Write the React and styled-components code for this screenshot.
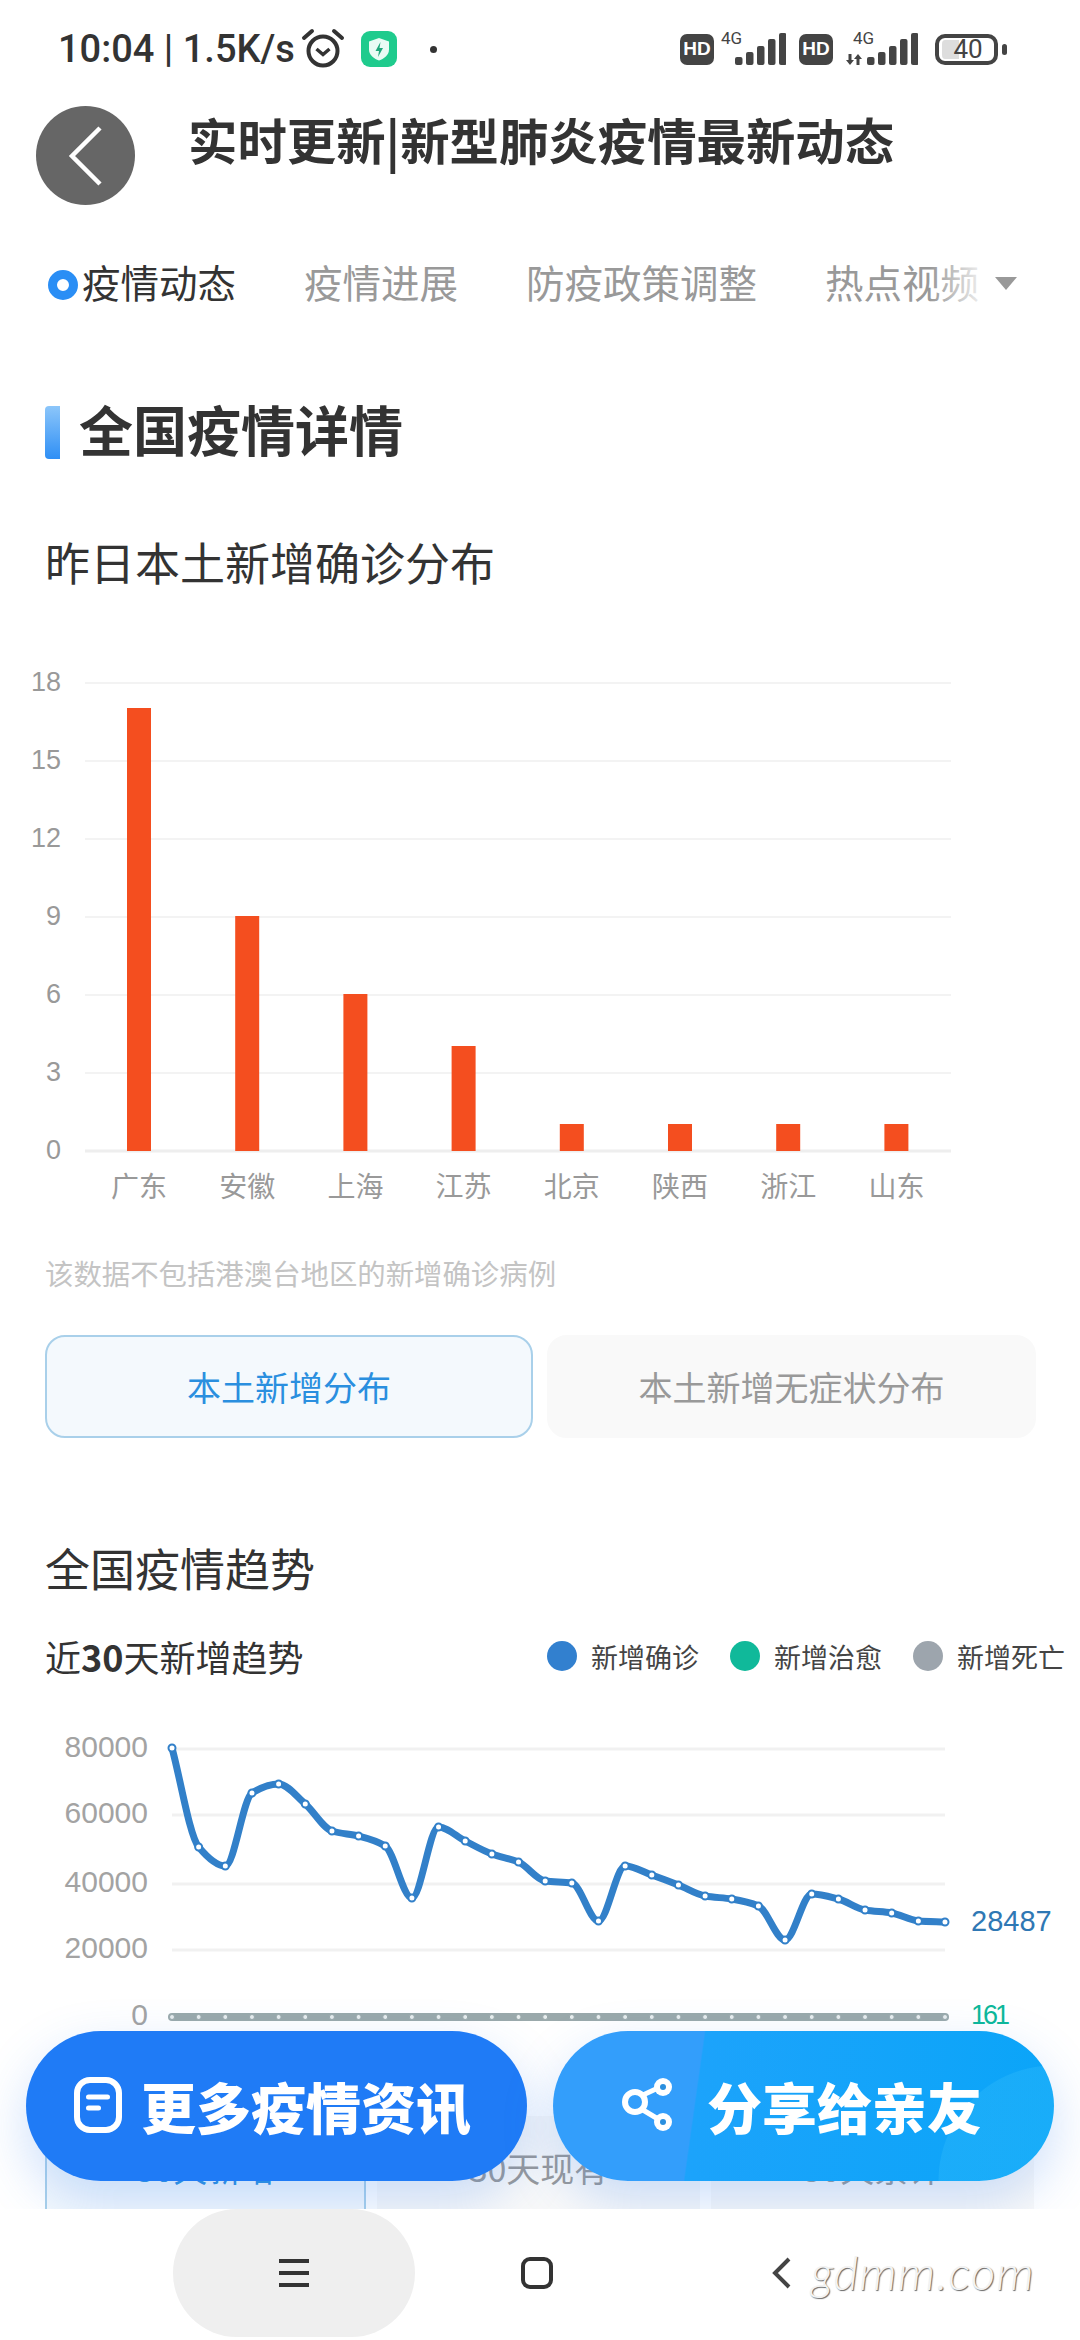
import styled, { createGlobalStyle } from "styled-components";

const GlobalStyle = createGlobalStyle`
  html, body {
    margin: 0;
    padding: 0;
    background: #fff;
  }
  * {
    box-sizing: border-box;
  }
`;

const Page = styled.div`
  position: relative;
  width: 1080px;
  height: 2340px;
  display: flex;
  flex-direction: column;
  overflow: hidden;
  background: #fff;
  color: #333;
  font-family: "Noto Sans CJK SC", "Noto Sans", sans-serif;
`;

const Content = styled.main`
  flex: 1;
  min-height: 0;
  overflow: hidden;
`;

const StatusBar = styled.div`
  height: 96px;
  display: flex;
  align-items: center;
  padding: 2px 73px 0 58px;
`;

const Clock = styled.span`
  font-family: Roboto, sans-serif;
  font-size: 38px;
  font-weight: 500;
  color: #333;
  white-space: nowrap;
`;

const AlarmIcon = styled.svg`
  width: 44px;
  height: 42px;
  margin-left: 6px;
`;

const ShieldIcon = styled.svg`
  width: 38px;
  height: 38px;
  margin-left: 15px;
`;

const Dot = styled.span`
  width: 7px;
  height: 7px;
  margin-left: 32px;
  border-radius: 50%;
  background: #333;
`;

const StatusRight = styled.div`
  margin-left: auto;
  display: flex;
  align-items: center;
`;

const HdTile = styled.span`
  width: 34px;
  height: 31px;
  margin-right: ${({ $gap }) => $gap}px;
  border-radius: 7px;
  background: #444;
  color: #fff;
  display: flex;
  align-items: center;
  justify-content: center;
  font-family: "Liberation Sans", sans-serif;
  font-size: 19px;
  font-weight: 700;
`;

const Signal = styled.div`
  position: relative;
  width: ${({ $width }) => $width}px;
  height: 32px;
  margin-right: ${({ $gap }) => $gap}px;
`;

const SignalType = styled.span`
  position: absolute;
  top: -4px;
  left: ${({ $left }) => $left}px;
  font-family: Roboto, sans-serif;
  font-size: 17px;
  line-height: 18px;
  color: #444;
`;

const Battery = styled.div`
  position: relative;
  width: 63px;
  height: 31px;
  margin-right: 9px;
  border: 4px solid #444;
  border-radius: 10px;
  background: linear-gradient(to right, #ddd 0 20px, transparent 20px);
  background-origin: padding-box;
  background-clip: content-box;
  padding: 2px 0 2px 3px;
  display: flex;
  align-items: center;
  justify-content: center;
  font-family: Roboto, sans-serif;
  font-size: 26px;
  line-height: 1;
  color: #444;

  &::after {
    content: "";
    position: absolute;
    right: -13px;
    top: 6px;
    width: 5px;
    height: 11px;
    border-radius: 3px;
    background: #444;
  }
`;

const Header = styled.header`
  height: 99px;
  margin-top: 10px;
  padding-left: 36px;
  display: flex;
  gap: 53px;
`;

const BackButton = styled.div`
  width: 99px;
  height: 99px;
  border-radius: 50%;
  background: #666;
  display: flex;
  align-items: center;
  justify-content: center;
`;

const PageTitle = styled.h1`
  margin: -3px 0 0;
  font-size: 49.4px;
  line-height: 72px;
  font-weight: 700;
  color: #333;
  white-space: nowrap;
`;

const TabBar = styled.nav`
  position: relative;
  height: 60px;
  margin-top: 50px;
  padding-left: 48px;
  display: flex;
  align-items: center;
  gap: 68px;
`;

const Tab = styled.span`
  display: flex;
  align-items: center;
  gap: 4px;
  font-size: 38.5px;
  line-height: 60px;
  color: ${({ $active }) => ($active ? "#333" : "#999")};
  white-space: nowrap;
`;

const TabLabel = styled.span`
  margin-bottom: 8px;
`;

const RadioDot = styled.span`
  width: 30px;
  height: 30px;
  border-radius: 50%;
  border: 9px solid #2a8ef5;
  background: #fff;
`;

const TabFade = styled.span`
  position: absolute;
  left: 930px;
  top: 0;
  width: 55px;
  height: 60px;
  background: linear-gradient(to right, rgba(255, 255, 255, 0), rgba(255, 255, 255, 0.9));
`;

const TabCaret = styled.span`
  position: absolute;
  left: 995px;
  top: 22px;
  width: 0;
  height: 0;
  border-left: 11px solid transparent;
  border-right: 11px solid transparent;
  border-top: 13px solid #999;
`;

const SectionTitle = styled.h2`
  height: 70px;
  margin: 82px 0 0;
  padding-left: 45px;
  display: flex;
  align-items: center;
  gap: 19px;
  font-size: 54px;
  line-height: 70px;
  font-weight: 700;
  color: #333;
`;

const SectionLabel = styled.span`
  margin-bottom: 6px;
`;

const Accent = styled.span`
  width: 15px;
  height: 53px;
  border-radius: 4px 0 0 4px;
  background: linear-gradient(to bottom, #8cc6fa, #2f8ff5);
`;

const SubTitle = styled.h3`
  height: 60px;
  margin: ${({ $top }) => $top}px 0 0;
  padding-left: 45px;
  font-size: 45px;
  line-height: 60px;
  font-weight: 400;
  color: #333;
`;

const ChartSvg = styled.svg`
  display: block;
  width: 1080px;
  height: ${({ $height }) => $height}px;
  margin-top: ${({ $top }) => $top}px;
`;

const Note = styled.p`
  height: 40px;
  margin: 33px 0 0;
  padding-left: 45px;
  font-size: 28.4px;
  line-height: 40px;
  color: #c4c4c4;
`;

const ToggleRow = styled.div`
  margin-top: ${({ $top }) => $top}px;
  padding: 0 44px 0 45px;
  display: grid;
  grid-template-columns: ${({ $columns }) => $columns};
  gap: ${({ $gap }) => $gap}px;
`;

const Toggle = styled.div`
  height: ${({ $tail = 0 }) => 103 + $tail}px;
  padding-bottom: ${({ $tail = 0 }) => $tail}px;
  border-radius: 20px;
  border: 2px solid ${({ $active }) => ($active ? "#a9d0ea" : "#f9f9f9")};
  background: ${({ $active }) => ($active ? "#f4f9fd" : "#f9f9f9")};
  color: ${({ $active }) => ($active ? "#2a8fdf" : "#999")};
  display: flex;
  align-items: center;
  justify-content: center;
  font-size: 34px;
`;

const TrendRow = styled.div`
  height: 50px;
  margin-top: 33px;
  padding-left: 45px;
  display: flex;
  align-items: center;
`;

const TrendTitle = styled.span`
  width: 502px;
  font-size: 36px;
  color: #333;
  white-space: nowrap;

  b {
    font-weight: 700;
  }
`;

const Legend = styled.div`
  display: flex;
  gap: 31px;
  white-space: nowrap;
`;

const LegendItem = styled.span`
  display: flex;
  align-items: center;
  gap: 14px;
  font-size: 27px;
  color: #444;

  &::before {
    content: "";
    width: 30px;
    height: 30px;
    border-radius: 50%;
    background: ${({ $color }) => $color};
  }
`;

const FloatBar = styled.div`
  position: absolute;
  left: 26px;
  top: 2031px;
  width: 1028px;
  display: flex;
  gap: 26px;
`;

const FloatButton = styled.div`
  flex: 0 0 501px;
  height: 150px;
  border-radius: 75px;
  padding: 0 0 3px ${({ $pad }) => $pad}px;
  display: flex;
  align-items: center;
  gap: ${({ $gap }) => $gap}px;
  color: #fff;
  font-size: 55px;
  font-weight: 900;
  white-space: nowrap;
  box-shadow: 0 20px 50px rgba(60, 130, 240, 0.25);
  background: ${({ $share }) =>
    $share
      ? "radial-gradient(circle at 100% 100%, rgba(45, 185, 250, 0.4) 0 115px, transparent 116px), linear-gradient(98deg, #339efb 0 29%, #1ca3fb 29.3%, #0aa5f8 100%)"
      : "#1f7bf6"};
`;

const NavBar = styled.div`
  position: relative;
  z-index: 2;
  height: 131px;
  background: #fff;
  padding-left: 173px;
  display: grid;
  grid-template-columns: 242px 242px 242px;
`;

const NavSlot = styled.div`
  height: 128px;
  display: flex;
  align-items: center;
  justify-content: center;
  padding-left: ${({ $shift = 0 }) => $shift}px;
  border-radius: ${({ $pill }) => ($pill ? "84px" : "0")};
  background: ${({ $pill }) => ($pill ? "#efefef" : "transparent")};
`;

const Watermark = styled.span`
  position: absolute;
  left: 811px;
  top: 33px;
  font-family: Lato, "Open Sans", sans-serif;
  font-size: 48px;
  line-height: 60px;
  font-style: italic;
  font-weight: 300;
  letter-spacing: 1px;
  color: #f3f3f3;
  text-shadow: 1px 1px 1px #666;
`;

const bars = [
  ["广东", 17],
  ["安徽", 9],
  ["上海", 6],
  ["江苏", 4],
  ["北京", 1],
  ["陕西", 1],
  ["浙江", 1],
  ["山东", 1],
];

// screen y of each daily point, read off the picture
const trend = [
  1748, 1847, 1866, 1793, 1784, 1804, 1831, 1836, 1846, 1898, 1827, 1841, 1854, 1862, 1881,
  1883, 1921, 1866, 1875, 1885, 1896, 1899, 1906, 1940, 1894, 1899, 1910, 1913, 1921, 1922,
];

const CHART2_TOP = 1690;
const stepX = (945 - 172) / 29;

function smoothPath(ys) {
  const xs = ys.map((_, i) => 172 + i * stepX);
  const slopes = ys.slice(1).map((y, i) => (y - ys[i]) / stepX);
  const tangents = ys.map((_, i) => {
    if (i === 0) return slopes[0];
    if (i === ys.length - 1) return slopes[i - 1];
    const a = slopes[i - 1];
    const b = slopes[i];
    if (a * b <= 0) return 0;
    return (2 * a * b) / (a + b);
  });
  let d = `M${xs[0]} ${ys[0]}`;
  for (let i = 1; i < ys.length; i++) {
    const h = stepX / 3;
    d += ` C${xs[i - 1] + h} ${ys[i - 1] + tangents[i - 1] * h} ${xs[i] - h} ${ys[i] - tangents[i] * h} ${xs[i]} ${ys[i]}`;
  }
  return d;
}

function BarChart() {
  const zero = 511;
  const unit = 26;
  return (
    <ChartSvg $height={580} $top={48} viewBox="0 0 1080 580">
      {[18, 15, 12, 9, 6, 3, 0].map((v) => {
        const y = zero - v * unit;
        return (
          <g key={v}>
            <line x1="85" x2="951" y1={y} y2={y} stroke={v === 0 ? "#eeeeee" : "#f3f3f3"} strokeWidth={v === 0 ? 3 : 2} />
            <text x="61" y={y + 8} textAnchor="end" fontSize="27" fontFamily="Liberation Sans" fill="#999">
              {v}
            </text>
          </g>
        );
      })}
      {bars.map(([name, value], i) => {
        const cx = 139 + i * 108.2;
        return (
          <g key={name}>
            <rect x={cx - 12} y={zero - value * unit - 1} width="24" height={value * unit + 1} fill="#f44e1f" />
            <text x={cx} y="557" textAnchor="middle" fontSize="28" fontFamily="Noto Sans CJK SC" fill="#999">
              {name}
            </text>
          </g>
        );
      })}
    </ChartSvg>
  );
}

function TrendChart() {
  return (
    <ChartSvg $height={426} $top={9} viewBox={`0 ${CHART2_TOP} 1080 426`}>
      {[
        ["80000", 1749],
        ["60000", 1815],
        ["40000", 1884],
        ["20000", 1950],
        ["0", 2017],
      ].map(([label, y]) => (
        <g key={label}>
          <line x1="172" x2="945" y1={y} y2={y} stroke="#f1f1f1" strokeWidth="3" />
          <text x="148" y={y + 8} textAnchor="end" fontSize="30" fontFamily="Liberation Sans" fill="#a3a3a3">
            {label}
          </text>
        </g>
      ))}
      <path d={smoothPath(trend)} fill="none" stroke="#3280c9" strokeWidth="7" strokeLinejoin="round" />
      {trend.map((y, i) => (
        <circle key={i} cx={172 + i * stepX} cy={y} r="3.5" fill="#fff" stroke="#3280c9" strokeWidth="2" />
      ))}
      <line x1="172" x2="945" y1="2017" y2="2017" stroke="#9aa9ab" strokeWidth="8" strokeLinecap="round" />
      {trend.map((_, i) => (
        <circle key={i} cx={172 + i * stepX} cy="2017" r="2.5" fill="#e8eeee" stroke="#9aa9ab" strokeWidth="1" />
      ))}
      <text x="971" y="1931" fontSize="29" fontFamily="Liberation Sans" fill="#2f78b4">
        28487
      </text>
      <text x="971" y="2024" fontSize="27" letterSpacing="-3" fontFamily="Liberation Sans" fill="#0db89a">
        161
      </text>
    </ChartSvg>
  );
}

function SignalBars({ offset }) {
  const tops = [24, 19, 13, 6, 0];
  return tops.map((top, i) => (
    <rect key={i} x={offset + 15 + i * 11} y={top} width="7.5" height={32 - top} rx="2" fill="#444" />
  ));
}

export default function App() {
  return (
    <Page>
      <GlobalStyle />
      <Content>
        <StatusBar>
          <Clock>10:04 | 1.5K/s</Clock>
          <AlarmIcon viewBox="0 0 44 42">
            <circle cx="22" cy="23" r="14.5" fill="none" stroke="#333" strokeWidth="4" />
            <path d="M15.5 21l6.5 5.5 6.5-5.5" fill="none" stroke="#333" strokeWidth="3.5" />
            <path d="M3 10L11 3M41 10L33 3" stroke="#333" strokeWidth="4" strokeLinecap="round" />
          </AlarmIcon>
          <ShieldIcon viewBox="0 0 38 38">
            <rect x="1" y="1" width="36" height="36" rx="9" fill="#1fcb8d" />
            <path d="M19 8l10 3.5v8c0 5.5-4.5 9-10 11-5.500-2-10-5.500-10-11v-8z" fill="#e9fbf4" />
            <path d="M20.500 12l-5 9h3.500l-1 6 5-9h-3.500z" fill="#1fa87b" />
          </ShieldIcon>
          <Dot />
          <StatusRight>
            <HdTile $gap={6}>HD</HdTile>
            <Signal $width={66} $gap={13}>
              <SignalType $left={1}>4G</SignalType>
              <svg width="66" height="32" viewBox="0 0 66 32">
                <SignalBars offset={0} />
              </svg>
            </Signal>
            <HdTile $gap={13}>HD</HdTile>
            <Signal $width={72} $gap={17}>
              <SignalType $left={7}>4G</SignalType>
              <svg width="72" height="32" viewBox="0 0 72 32">
                <path d="M4 32l-4-5h2.500v-6h3v6H8zM12 21l4 5h-2.500v6h-3v-6H8z" fill="#444" />
                <SignalBars offset={6} />
              </svg>
            </Signal>
            <Battery>40</Battery>
          </StatusRight>
        </StatusBar>

        <Header>
          <BackButton>
            <svg width="36" height="62" viewBox="0 0 36 62">
              <path d="M32 3L4 31l28 28" fill="none" stroke="#fff" strokeWidth="4.500" />
            </svg>
          </BackButton>
          <PageTitle>实时更新|新型肺炎疫情最新动态</PageTitle>
        </Header>

        <TabBar>
          <Tab $active>
            <RadioDot />
            <TabLabel>疫情动态</TabLabel>
          </Tab>
          <Tab>
            <TabLabel>疫情进展</TabLabel>
          </Tab>
          <Tab>
            <TabLabel>防疫政策调整</TabLabel>
          </Tab>
          <Tab>
            <TabLabel>热点视频</TabLabel>
          </Tab>
          <TabFade />
          <TabCaret />
        </TabBar>

        <SectionTitle>
          <Accent />
          <SectionLabel>全国疫情详情</SectionLabel>
        </SectionTitle>

        <SubTitle $top={65}>昨日本土新增确诊分布</SubTitle>
        <BarChart />
        <Note>该数据不包括港澳台地区的新增确诊病例</Note>
        <ToggleRow $top={42} $columns="488px 489px" $gap={14}>
          <Toggle $active>本土新增分布</Toggle>
          <Toggle>本土新增无症状分布</Toggle>
        </ToggleRow>

        <SubTitle $top={100}>全国疫情趋势</SubTitle>
        <TrendRow>
          <TrendTitle>
            近<b>30</b>天新增趋势
          </TrendTitle>
          <Legend>
            <LegendItem $color="#3280cf">新增确诊</LegendItem>
            <LegendItem $color="#10b99a">新增治愈</LegendItem>
            <LegendItem $color="#9da5ad">新增死亡</LegendItem>
          </Legend>
        </TrendRow>
        <TrendChart />
        <ToggleRow $top={0} $columns="321px 323px 323px" $gap={11}>
          <Toggle $active $tail={30}>30天新增</Toggle>
          <Toggle $tail={30}>30天现有</Toggle>
          <Toggle $tail={30}>30天累计</Toggle>
        </ToggleRow>
      </Content>

      <FloatBar>
        <FloatButton $pad={48} $gap={19}>
          <svg width="48" height="56" viewBox="0 0 48 56">
            <rect x="3" y="3" width="42" height="50" rx="13" fill="none" stroke="#fff" strokeWidth="6" />
            <path d="M14.500 20h19M14.500 31h10" stroke="#fff" strokeWidth="5" strokeLinecap="round" />
          </svg>
          更多疫情资讯
        </FloatButton>
        <FloatButton $share $pad={69} $gap={33}>
          <svg width="52" height="56" viewBox="0 0 52 56">
            <circle cx="13" cy="25" r="10" fill="none" stroke="#fff" strokeWidth="6" />
            <path d="M21 18l15-7M21 33l15 9" stroke="#fff" strokeWidth="5" />
            <circle cx="41" cy="10" r="9" fill="#fff" />
            <circle cx="41" cy="45" r="9" fill="#fff" />
            <circle cx="41" cy="10" r="3" fill="#2a8fdf" />
            <circle cx="41" cy="45" r="3" fill="#2a8fdf" />
          </svg>
          分享给亲友
        </FloatButton>
      </FloatBar>

      <NavBar>
        <NavSlot $pill>
          <svg width="32" height="30" viewBox="0 0 32 30">
            <path d="M1 3h30M1 15h30M1 27h30" stroke="#333" strokeWidth="4" />
          </svg>
        </NavSlot>
        <NavSlot $shift={2}>
          <svg width="32" height="32" viewBox="0 0 32 32">
            <rect x="2" y="2" width="28" height="28" rx="7" fill="none" stroke="#333" strokeWidth="4" />
          </svg>
        </NavSlot>
        <NavSlot $shift={18}>
          <svg width="32" height="32" viewBox="0 0 32 32">
            <path d="M18 2L4 16l14 14" fill="none" stroke="#444" strokeWidth="4" />
          </svg>
        </NavSlot>
        <Watermark>gdmm.com</Watermark>
      </NavBar>
    </Page>
  );
}
